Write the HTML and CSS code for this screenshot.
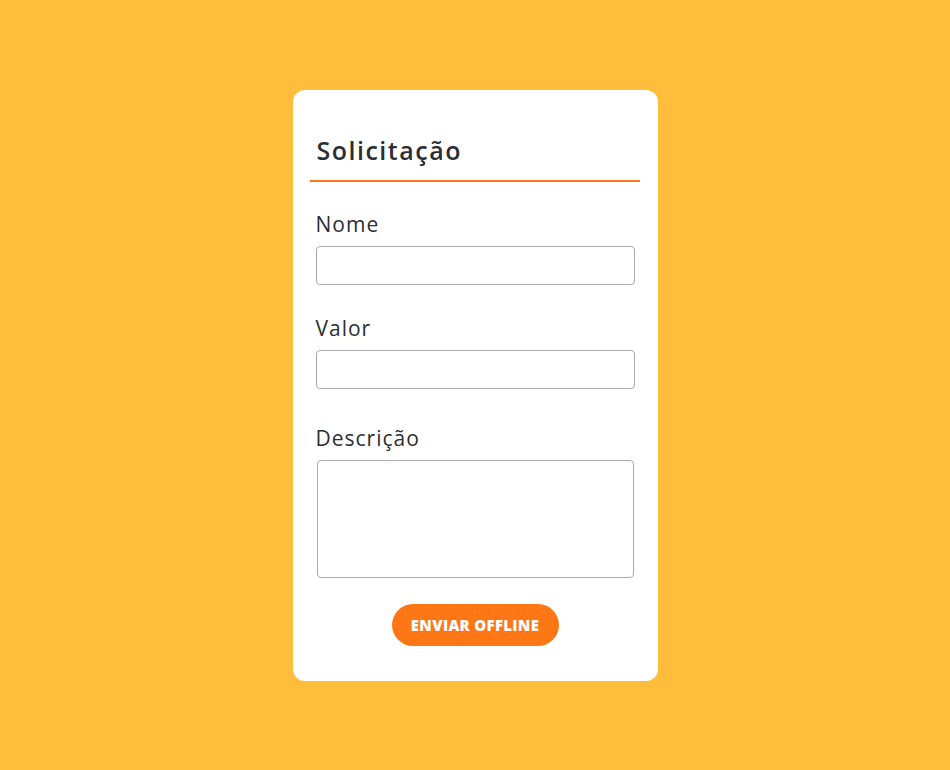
FILE: index.html
```html
<!DOCTYPE html>
<html lang="pt-BR">
<head>
    <meta charset="UTF-8">
    <meta name="viewport" content="width=device-width, initial-scale=1.0">
    <title>Solicitação</title>
    <link rel="stylesheet" href="styles.css">
</head>
<body>
    <div class="card">
        <div class="card-header">
            <h2>Solicitação</h2>
        </div>
        <form class="form">
            <div class="field">
                <label for="nome">Nome</label>
                <input type="text" id="nome">
            </div>
            <div class="field">
                <label for="valor">Valor</label>
                <input type="text" id="valor">
            </div>
            <div class="field field-desc">
                <label for="descricao">Descrição</label>
                <textarea id="descricao"></textarea>
            </div>
            <div class="button-container">
                <button type="button" class="btn">ENVIAR OFFLINE</button>
            </div>
        </form>
    </div>
</body>
</html>
```

FILE: styles.css
```css
* { box-sizing: border-box; }
:root {
    --bg-color: #ffbd3b;
    --card-bg: #ffffff;
    --text-color: #2b2e33;
    --accent: #ff7614;
    --border-color: #a9a9ad;
}
body {
    margin: 0;
    min-height: 100vh;
    background: var(--bg-color);
    font-family: 'Open Sans', 'Noto Sans', sans-serif;
    color: var(--text-color);
    display: flex;
    align-items: center;
    justify-content: center;
}
.card {
    background: var(--card-bg);
    width: 365px;
    height: 591px;
    border-radius: 12px;
    padding: 44px 23px 0;
}
.card-header {
    margin: 0 -5px 0 -6px;
    padding: 0 6px 14px 7px;
    border-bottom: 2px solid var(--accent);
}
.card-header h2 {
    margin: 0;
    font-size: 25px;
    font-weight: 600;
    line-height: 32px;
    letter-spacing: 1.5px;
}
.form {
    display: flex;
    flex-direction: column;
    padding-top: 28px;
}
.field {
    display: flex;
    flex-direction: column;
    margin-bottom: 29px;
}
.field-desc { margin-top: 6px; }
.field label {
    font-size: 21px;
    line-height: 28px;
    margin-bottom: 8px;
    letter-spacing: 1px;
}
.field input,
.field textarea {
    width: 100%;
    height: 39px;
    border: 1px solid var(--border-color);
    border-radius: 4px;
    font: inherit;
    padding: 6px 10px;
    outline: none;
}
.field textarea {
    height: 118px;
    resize: none;
    width: 317px;
    margin-left: 1px;
}
.button-container {
    display: flex;
    justify-content: center;
    margin-top: -3px;
}
.btn {
    width: 167px;
    height: 42px;
    border: none;
    border-radius: 21px;
    background: var(--accent);
    color: white;
    font-family: 'Open Sans', sans-serif;
    font-weight: 800;
    font-size: 15px;
    letter-spacing: 0.3px;
    cursor: pointer;
}
```
